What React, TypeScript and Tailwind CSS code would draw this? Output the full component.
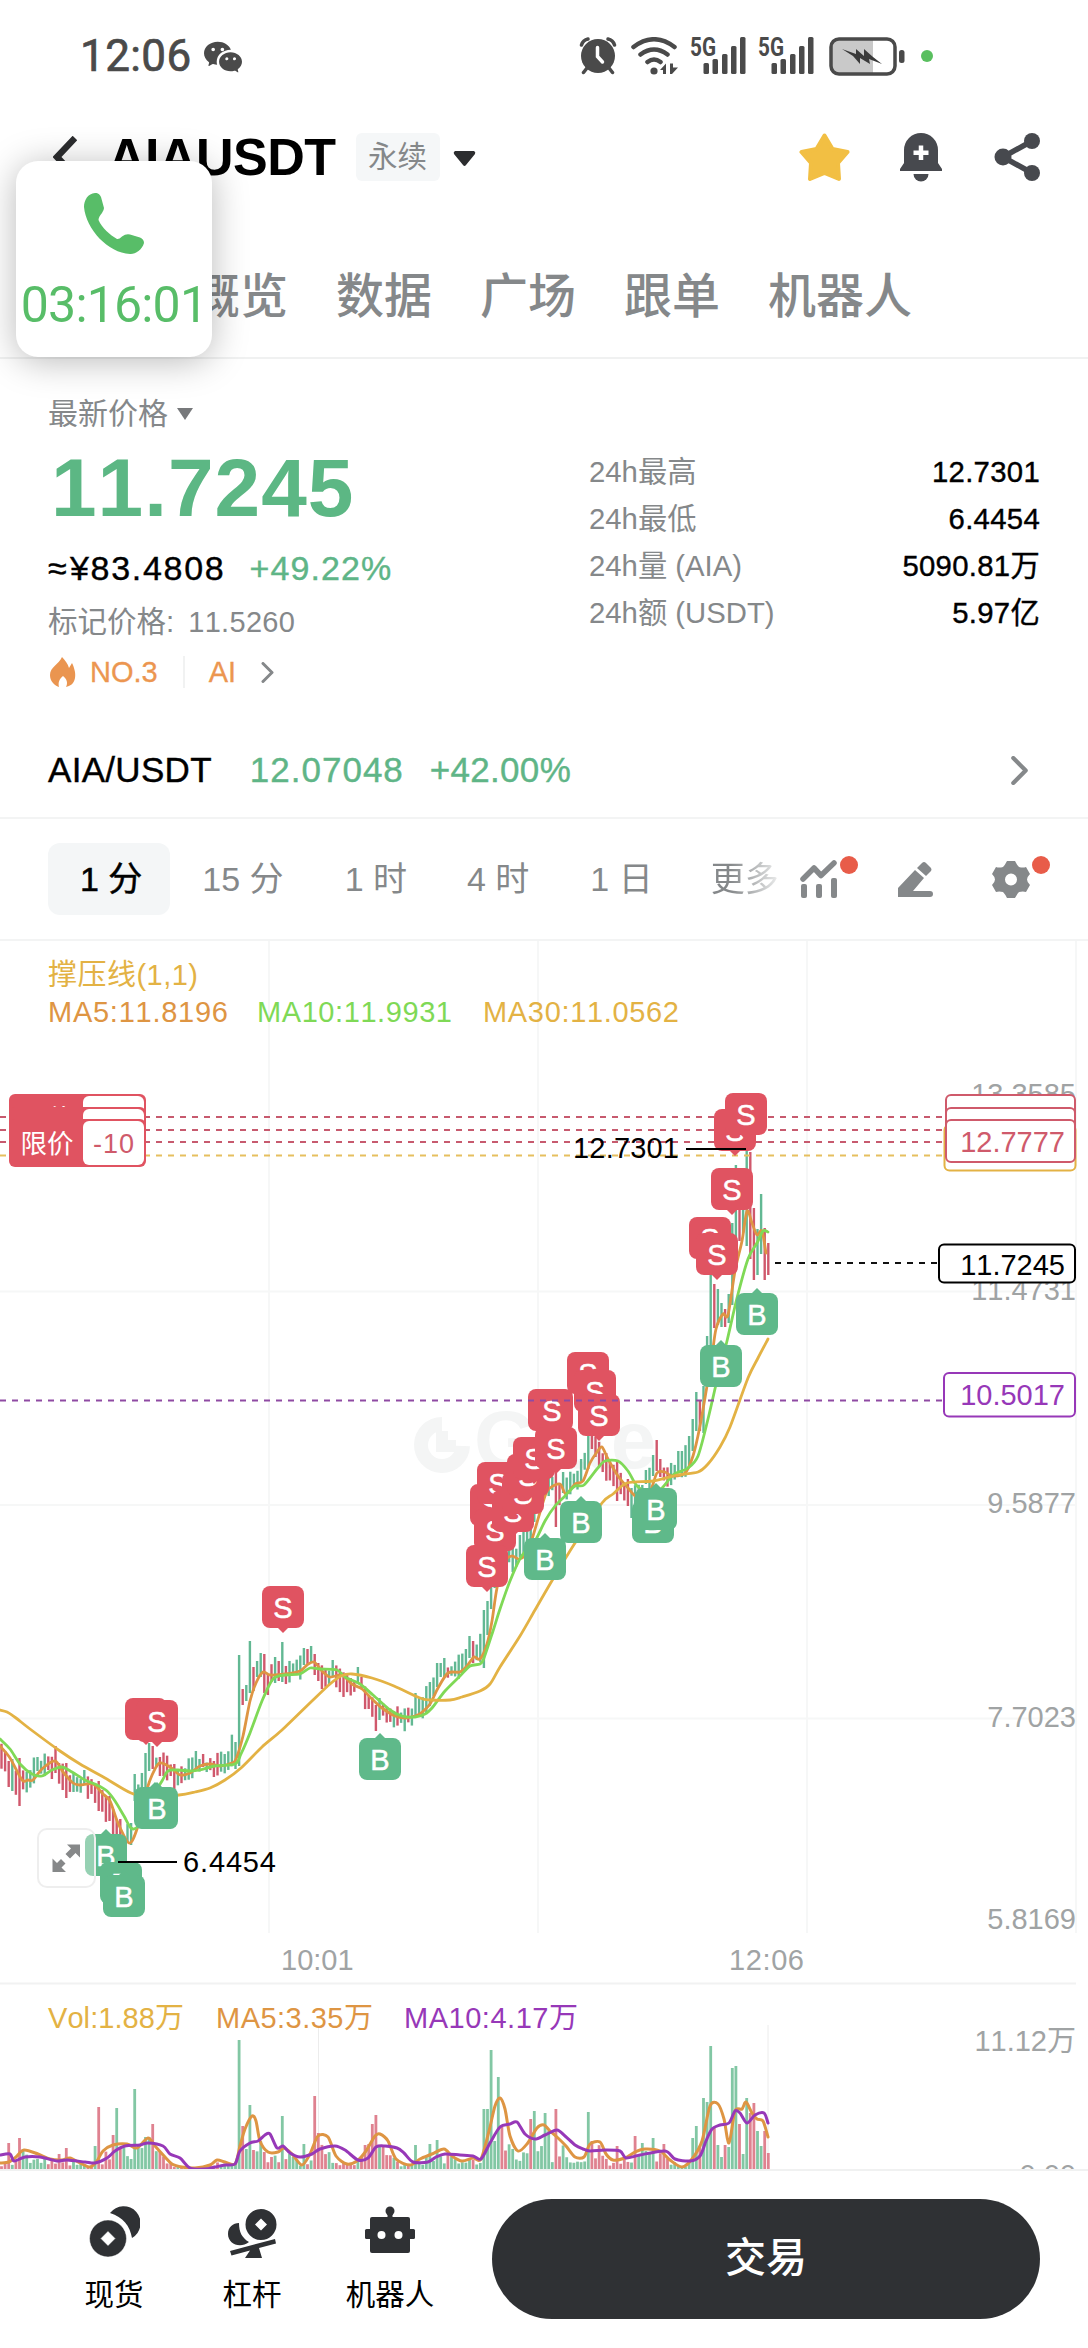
import type { ReactNode } from 'react';
import { BsWechat } from 'react-icons/bs';

type Pt = [number, number];

const GREEN = '#5fb98a';
const RED = '#e05361';
const UP = '#62b893';
const DOWN = '#d0586c';
const ORANGE = '#de9543';
const LIME = '#7fd956';
const GOLD = '#e3b244';
const PURPLE = '#9738b8';
const AXIS = '#a0a3a4';

/* ---------- chart data ---------- */

const ma5: Pt[] = [[0, 1745], [10, 1757], [22, 1779], [28, 1779], [33, 1779], [42, 1768], [55, 1760], [63, 1771], [73, 1782], [80, 1784], [93, 1783], [103, 1793], [110, 1800], [118, 1822], [129, 1842], [137, 1828], [148, 1785], [155, 1768], [160, 1762], [170, 1766], [180, 1774], [190, 1772], [200, 1765], [210, 1763], [220, 1765], [232, 1762], [236, 1758], [243, 1735], [250, 1700], [256, 1682], [263, 1671], [270, 1674], [285, 1673], [300, 1670], [307, 1664], [314, 1661], [322, 1670], [330, 1676], [342, 1674], [352, 1683], [362, 1688], [372, 1698], [382, 1707], [395, 1715], [405, 1717], [415, 1715], [421, 1712], [430, 1703], [438, 1687], [448, 1672], [460, 1671], [467, 1665], [474, 1656], [480, 1658], [487, 1643], [492, 1620], [497, 1587], [505, 1560], [512, 1555], [519, 1558], [527, 1552], [533, 1535], [545, 1495], [550, 1487], [560, 1483], [566, 1493], [575, 1483], [583, 1480], [590, 1462], [597, 1451], [602, 1446], [608, 1458], [618, 1475], [628, 1487], [637, 1496], [650, 1490], [657, 1472], [665, 1471], [672, 1475], [685, 1472], [693, 1455], [700, 1425], [707, 1385], [712, 1355], [716, 1328], [723, 1313], [728, 1314], [735, 1270], [742, 1240], [747, 1210], [752, 1222], [757, 1234], [762, 1230], [766, 1252]];

const ma10: Pt[] = [[0, 1738], [10, 1748], [20, 1763], [32, 1773], [42, 1775], [52, 1769], [62, 1766], [72, 1771], [85, 1779], [97, 1784], [107, 1790], [115, 1800], [124, 1815], [131, 1827], [138, 1825], [150, 1800], [162, 1780], [168, 1770], [178, 1769], [190, 1770], [200, 1769], [215, 1765], [235, 1763], [241, 1753], [250, 1732], [262, 1700], [273, 1678], [285, 1674], [300, 1673], [310, 1667], [320, 1668], [337, 1669], [345, 1676], [360, 1683], [373, 1694], [390, 1709], [402, 1715], [415, 1716], [425, 1713], [432, 1707], [445, 1690], [460, 1675], [470, 1665], [480, 1663], [484, 1657], [493, 1630], [500, 1608], [510, 1580], [521, 1556], [535, 1540], [545, 1520], [555, 1505], [565, 1495], [575, 1485], [584, 1484], [597, 1468], [605, 1460], [618, 1460], [628, 1470], [637, 1485], [650, 1492], [662, 1487], [673, 1474], [688, 1467], [698, 1455], [708, 1418], [718, 1375], [727, 1340], [737, 1297], [748, 1258], [757, 1242], [763, 1230], [768, 1231]];

const ma30: Pt[] = [[0, 1709], [7, 1711], [16, 1717], [30, 1728], [60, 1750], [80, 1763], [105, 1777], [131, 1792], [150, 1796], [179, 1794], [195, 1791], [210, 1787], [225, 1779], [241, 1767], [262, 1746], [282, 1729], [312, 1700], [330, 1683], [341, 1675], [352, 1673], [372, 1677], [394, 1685], [420, 1697], [430, 1699], [450, 1699], [462, 1696], [480, 1690], [490, 1683], [500, 1666], [520, 1635], [535, 1609], [553, 1578], [575, 1542], [602, 1502], [613, 1493], [627, 1482], [653, 1480], [677, 1474], [698, 1471], [708, 1463], [720, 1446], [730, 1426], [748, 1377], [758, 1357], [768, 1338]];

const volMa5: Pt[] = [[0, 2162], [9, 2161], [16, 2156], [24, 2149], [38, 2153], [50, 2158], [62, 2159], [70, 2157], [80, 2162], [90, 2166], [97, 2160], [103, 2150], [113, 2144], [127, 2143], [137, 2147], [148, 2137], [155, 2145], [165, 2156], [172, 2163], [182, 2166], [195, 2167], [210, 2164], [217, 2159], [225, 2161], [235, 2163], [240, 2145], [245, 2128], [252, 2115], [256, 2120], [260, 2140], [268, 2151], [278, 2151], [284, 2147], [292, 2153], [302, 2164], [310, 2153], [318, 2135], [328, 2136], [336, 2155], [347, 2163], [357, 2160], [366, 2150], [375, 2135], [380, 2133], [388, 2140], [396, 2158], [410, 2164], [420, 2158], [432, 2153], [444, 2148], [452, 2155], [462, 2160], [473, 2157], [481, 2158], [489, 2130], [495, 2105], [500, 2097], [505, 2108], [510, 2135], [518, 2150], [527, 2143], [537, 2127], [544, 2124], [550, 2130], [558, 2137], [566, 2145], [575, 2156], [584, 2156], [590, 2143], [600, 2141], [606, 2153], [613, 2159], [625, 2157], [635, 2151], [645, 2148], [660, 2150], [670, 2159], [682, 2166], [692, 2158], [702, 2140], [710, 2105], [718, 2103], [724, 2118], [729, 2142], [735, 2110], [742, 2108], [746, 2101], [752, 2112], [757, 2118], [763, 2120], [768, 2136]];

const volMa10: Pt[] = [[0, 2154], [10, 2153], [14, 2160], [25, 2156], [40, 2156], [57, 2160], [67, 2159], [85, 2161], [95, 2162], [107, 2157], [115, 2150], [125, 2145], [140, 2144], [148, 2142], [163, 2145], [170, 2153], [180, 2157], [190, 2167], [205, 2168], [215, 2166], [225, 2164], [235, 2163], [240, 2150], [250, 2142], [258, 2140], [265, 2134], [270, 2133], [277, 2147], [283, 2145], [290, 2152], [300, 2156], [312, 2153], [320, 2148], [335, 2145], [345, 2149], [358, 2159], [368, 2157], [376, 2146], [385, 2145], [397, 2147], [404, 2152], [413, 2161], [428, 2161], [436, 2156], [445, 2153], [460, 2154], [473, 2155], [481, 2158], [490, 2142], [500, 2126], [510, 2123], [517, 2121], [525, 2133], [535, 2138], [545, 2134], [557, 2129], [565, 2135], [575, 2144], [583, 2148], [590, 2150], [605, 2149], [620, 2150], [626, 2157], [640, 2154], [665, 2150], [675, 2158], [690, 2160], [700, 2155], [706, 2140], [712, 2128], [720, 2124], [729, 2122], [735, 2110], [740, 2112], [747, 2122], [755, 2114], [764, 2112], [768, 2122]];

// x, high, low, 1 = up / 0 = down
const bigCandles: number[][] = [
  [9, 1760, 1786, 0], [12, 1758, 1790, 1], [20, 1757, 1805, 0], [38, 1756, 1770, 1], [56, 1745, 1772, 0], [67, 1762, 1797, 0],
  [85, 1769, 1784, 1], [99, 1780, 1810, 0], [109, 1795, 1820, 0], [113, 1808, 1834, 0], [120, 1818, 1836, 0], [131, 1822, 1844, 1],
  [135, 1773, 1800, 1], [145, 1752, 1790, 1], [149, 1742, 1770, 1], [153, 1745, 1768, 0], [160, 1756, 1775, 0], [174, 1763, 1790, 0],
  [196, 1750, 1768, 1], [203, 1753, 1766, 0], [214, 1760, 1776, 0], [236, 1741, 1768, 1], [239, 1654, 1765, 1], [243, 1688, 1704, 0],
  [247, 1684, 1700, 1], [250, 1640, 1692, 1], [254, 1666, 1690, 0], [257, 1660, 1676, 1], [261, 1652, 1676, 1], [264.5, 1653, 1692, 0],
  [268, 1674, 1694, 0], [275, 1656, 1682, 1], [279, 1660, 1680, 0], [282.5, 1641, 1681, 1], [304, 1647, 1664, 1], [308, 1648, 1664, 0],
  [311, 1645, 1662, 1], [315, 1653, 1674, 0], [319, 1662, 1680, 0], [333, 1659, 1676, 1], [358, 1666, 1683, 1], [362, 1676, 1688, 0],
  [376, 1704, 1730, 0], [379, 1697, 1719, 1], [415, 1692, 1715, 1], [437, 1662, 1686, 1], [441, 1662, 1676, 1], [444, 1657, 1676, 1],
  [466, 1648, 1668, 1], [469, 1635, 1657, 1], [473, 1640, 1662, 0], [484, 1609, 1667, 1], [487, 1600, 1634, 1], [491, 1585, 1608, 1],
  [512, 1545, 1571, 1], [519, 1534, 1556, 1], [556, 1472, 1526, 0], [563, 1471, 1492, 1], [588, 1430, 1468, 1], [592, 1432, 1448, 0],
  [595, 1436, 1456, 0], [617, 1460, 1500, 0], [628, 1478, 1505, 0], [632, 1487, 1517, 1], [646, 1469, 1483, 1], [653, 1454, 1475, 1],
  [656, 1439, 1470, 0], [660, 1458, 1476, 0], [678, 1450, 1472, 1], [689, 1435, 1466, 1], [692, 1418, 1450, 1], [696, 1391, 1430, 1],
  [699.5, 1400, 1430, 0], [703, 1385, 1432, 1], [710, 1270, 1378, 1], [714, 1283, 1327, 0], [717, 1288, 1324, 1], [721, 1302, 1326, 1],
  [725, 1308, 1326, 0], [728, 1293, 1322, 1], [732, 1222, 1304, 1], [735.5, 1164, 1250, 1], [739, 1206, 1240, 0], [743, 1195, 1232, 1],
  [746, 1149, 1245, 1], [750, 1151, 1258, 0], [753.5, 1207, 1279, 0], [757, 1228, 1274, 1], [760.5, 1193, 1253, 1], [764, 1227, 1279, 0], [767.5, 1242, 1274, 0],
];

// x, height, 1 = up / 0 = down
const bigVolumes: number[][] = [
  [9, 26, 0], [20, 31, 0], [24, 20, 1], [60, 15, 0], [67, 21, 0], [96, 23, 1], [99, 62, 0], [113, 34, 0], [117, 61, 1], [135, 80, 1],
  [146, 32, 1], [150, 32, 1], [153, 45, 0], [239.5, 129, 1], [243, 43, 0], [250, 64, 1], [254, 19, 0], [261, 28, 1], [282.5, 53, 1],
  [304, 25, 1], [315, 73, 0], [318, 36, 0], [365, 24, 0], [369, 25, 0], [372, 45, 0], [376, 54, 0], [379, 22, 1], [415, 24, 1],
  [430, 25, 1], [437, 29, 1], [484, 60, 1], [487.5, 60, 1], [491, 119, 1], [494.5, 28, 1], [498, 92, 1], [502, 42, 0], [530, 50, 0],
  [534, 58, 1], [545, 56, 1], [548, 38, 1], [555.5, 60, 0], [588, 57, 1], [592, 28, 0], [617, 23, 0], [635, 33, 0], [642, 26, 1],
  [653, 31, 1], [664, 25, 0], [692, 31, 1], [696, 43, 1], [703, 71, 1], [706.5, 67, 1], [710, 123, 1], [714, 41, 0], [717, 24, 1],
  [721, 12, 1], [725, 24, 0], [728, 22, 1], [731.5, 101, 1], [735.5, 103, 1], [739, 45, 0], [743, 15, 1], [746, 71, 1], [750, 56, 0],
  [753.5, 66, 0], [757, 38, 1], [760.5, 23, 1], [764, 38, 0], [767.5, 16, 0],
];

const STEP = 3.6;
const COUNT = 214;

const rand = (n: number) => {
  const v = Math.sin(n * 127.1 + 11.7) * 43758.5453;
  return v - Math.floor(v);
};

const yAt = (pts: Pt[], x: number) => {
  if (x >= pts[pts.length - 1][0]) return pts[pts.length - 1][1];
  const i = Math.max(1, pts.findIndex((p) => p[0] > x));
  const [x0, y0] = pts[i - 1];
  const [x1, y1] = pts[i];
  return y0 + ((y1 - y0) * (x - x0)) / (x1 - x0);
};

const candles = Array.from({ length: COUNT }, (_, i) => {
  const x = 1.5 + i * STEP;
  const fixed = bigCandles.find((c) => Math.abs(c[0] - x) < STEP / 2);
  if (fixed) return { x, top: fixed[1], bottom: fixed[2], up: fixed[3] === 1 };
  const slope = yAt(ma5, x + 9) - yAt(ma5, x + 2);
  const mid = yAt(ma5, x + 6) + (rand(i) - 0.5) * 6;
  const half = 4 + rand(i + 300) * 7 + Math.min(8, Math.abs(slope) * 0.3);
  return { x, top: mid - half, bottom: mid + half, up: slope + (rand(i + 700) - 0.5) * 8 < 0 };
});

const volumes = Array.from({ length: COUNT }, (_, i) => {
  const x = 1.5 + i * STEP;
  const fixed = bigVolumes.find((c) => Math.abs(c[0] - x) < STEP / 2);
  if (fixed) return { x, h: fixed[1], up: fixed[2] === 1 };
  const avg = Math.min(26, 2168 - yAt(volMa5, x));
  return { x, h: 1 + avg * (0.2 + rand(i + 900) * 0.75), up: candles[i].up };
});

const line = (pts: Pt[]) => {
  let d = `M${pts[0][0]} ${pts[0][1]}`;
  for (let i = 0; i < pts.length - 1; i++) {
    const a = pts[Math.max(0, i - 1)];
    const b = pts[i];
    const c = pts[i + 1];
    const e = pts[Math.min(pts.length - 1, i + 2)];
    d += `C${b[0] + (c[0] - a[0]) / 7} ${b[1] + (c[1] - a[1]) / 7} ${c[0] - (e[0] - b[0]) / 7} ${c[1] - (e[1] - b[1]) / 7} ${c[0]} ${c[1]}`;
  }
  return d;
};

// left, top of each trade marker, in paint order
const trades: [string, number, number][] = [
  ['S', 125, 1697], ['S', 136, 1699], ['B', 134, 1786], ['B', 136, 1786], ['S', 262, 1585], ['B', 359, 1737],
  ['B', 85, 1833], ['B', 100, 1861], ['B', 103, 1874],
  ['S', 470, 1483], ['S', 477, 1461], ['S', 474, 1508], ['S', 492, 1489], ['S', 502, 1471], ['S', 507, 1453], ['S', 513, 1436],
  ['S', 466, 1544], ['S', 528, 1388], ['S', 531, 1388], ['S', 535, 1426],
  ['S', 567, 1351], ['S', 574, 1369], ['S', 578, 1393],
  ['B', 524, 1537], ['B', 560, 1500], ['B', 632, 1500], ['B', 635, 1487],
  ['S', 714, 1108], ['S', 725, 1092], ['S', 711, 1167], ['S', 689, 1216], ['S', 696, 1232],
  ['B', 736, 1292], ['B', 700, 1344],
];

/* ---------- chart ---------- */

const Trade = ({ side, x, y }: { side: string; x: number; y: number }) => {
  const sell = side === 'S';
  return (
    <g transform={`translate(${x} ${y})`} fill={sell ? RED : GREEN}>
      <rect width="42" height="42" rx="8" />
      <path d={sell ? 'M15 41L21 47L27 41Z' : 'M15 1L21 -5L27 1Z'} />
      <text x="21" y="31.5" textAnchor="middle" fontSize="29" fill="#fff" stroke="#fff" strokeWidth="0.5">{side}</text>
    </g>
  );
};

const PriceTag = ({ x, y, w, h, color, text, base }: any) => (
  <g>
    <rect x={x} y={y} width={w} height={h} rx="5" fill="#fff" stroke={color} strokeWidth="2" />
    {text && <text x="1065" y={base} textAnchor="end" fill={color}>{text}</text>}
  </g>
);

const Chart = () => (
  <svg viewBox="0 940 1088 1228" className="block h-[1228px] w-full" fontSize="29">
    {/* grid */}
    <g stroke="#f6f7f7" strokeWidth="2">
      {[269, 538, 807, 1076].map((x) => <line key={x} x1={x} x2={x} y1="940" y2="1932" />)}
      {[1290.5, 1504, 1717.5].map((y) => <line key={y} x1="0" x2="1076" y1={y} y2={y} />)}
      <line x1="0" x2="1076" y1="1982.5" y2="1982.5" stroke="#f1f2f2" />
      <line x1="318.5" x2="318.5" y1="2026" y2="2168" strokeWidth="1" stroke="#ececec" />
      <line x1="768" x2="768" y1="2024" y2="2168" strokeWidth="1" stroke="#ececec" />
    </g>

    {/* watermark */}
    <g fill="none" stroke="#f4f5f5" strokeWidth="14">
      <path d="M442 1423A21 21 0 1 0 463 1445" />
      <path d="M442 1430V1445H456" strokeWidth="12" />
      <text x="474" y="1467" fontSize="82" fontWeight="700" fill="#f4f5f5" stroke="none">Gate</text>
    </g>

    {/* legends */}
    <text x="48" y="984" fill={GOLD} textLength="150">撑压线(1,1)</text>
    <text x="48" y="1021" fill={ORANGE} textLength="180">MA5:11.8196</text>
    <text x="257" y="1021" fill={LIME} textLength="195">MA10:11.9931</text>
    <text x="483" y="1021" fill={GOLD} textLength="196">MA30:11.0562</text>

    {/* axes */}
    <g fill={AXIS}>
      <text x="1076" y="1103" textAnchor="end">13.3585</text>
      <text x="1076" y="1299" textAnchor="end">11.4731</text>
      <text x="1076" y="1512" textAnchor="end">9.5877</text>
      <text x="1076" y="1726" textAnchor="end">7.7023</text>
      <text x="1076" y="1928" textAnchor="end">5.8169</text>
      <text x="281" y="1969">10:01</text>
      <text x="729" y="1969" textLength="75">12:06</text>
      <text x="1076" y="2050" textAnchor="end">11.12万</text>
      <text x="1076" y="2184" textAnchor="end">0.00</text>
    </g>

    {candles.map((c) => (
      <rect key={c.x} x={c.x - 1.2} y={c.top} width="2.4" height={c.bottom - c.top} fill={c.up ? UP : DOWN} />
    ))}

    <g fill="none" strokeWidth="2.8" strokeLinecap="round" strokeLinejoin="round">
      <path d={line(ma5)} stroke={ORANGE} />
      <path d={line(ma10)} stroke={LIME} />
      <path d={line(ma30)} stroke={GOLD} />
    </g>

    {/* pending orders */}
    <g strokeWidth="2" strokeDasharray="6 6">
      {[1116, 1129, 1141].map((y) => <line key={y} x1="0" x2="945" y1={y} y2={y} stroke="#c75a6e" />)}
      <line x1="0" x2="944" y1="1154.5" y2="1154.5" stroke="#e6bf5e" />
    </g>

    {trades.map(([side, x, y]) => <Trade key={`${x}-${y}`} side={side} x={x} y={y} />)}

    <line x1="0" x2="944" y1="1399.5" y2="1399.5" stroke="#8f4aa3" strokeWidth="2" strokeDasharray="6 6" />
    <line x1="775" x2="938" y1="1262" y2="1262" stroke="#111" strokeWidth="2" strokeDasharray="6 6" />

    {/* high and low */}
    <text x="679" y="1156.5" textAnchor="end" textLength="106">12.7301</text>
    <line x1="686" x2="746" y1="1148" y2="1148" stroke="#000" strokeWidth="2" />
    <text x="183" y="1871" textLength="93">6.4454</text>

    <PriceTag x={944.5} y={1124} w={131} h={45.5} color={GOLD} />
    <PriceTag x={946} y={1094} w={129} h={43} color="#cf5a6b" />
    <PriceTag x={946} y={1107} w={129} h={43} color="#cf5a6b" />
    <PriceTag x={946} y={1119} w={129} h={42} color="#cf5a6b" text="12.7777" base={1151} />
    <PriceTag x={939} y={1243.5} w={136} h={38} color="#000" text="11.7245" base={1274} />
    <PriceTag x={944} y={1372} w={131} h={43.5} color={PURPLE} text="10.5017" base={1404} />

    {[1093, 1106, 1118].map((y) => (
      <g key={y} transform={`translate(9 ${y})`}>
        <rect width="137" height="48" rx="6" fill={RED} />
        <text x="11.5" y="33.5" fontSize="26.5" fill="#fff">限价</text>
        <rect x="74" y="2" width="61" height="44" rx="6" fill="#fff" />
        <text x="84" y="33.5" fontSize="27" fill="#cf5a6b" textLength="41">-10</text>
      </g>
    ))}

    {/* fullscreen toggle */}
    <rect x="38" y="1828" width="57" height="58" rx="9" fill="#fff" fillOpacity="0.35" stroke="#eeeeee" strokeWidth="2" />
    <path d="M67 1843.5H80V1856.5L75.5 1852L70 1857.5L65.5 1853L71 1847.5ZM66 1871H52.5V1857.5L57 1862L61 1858L65.5 1862.5L61.5 1866.5Z" fill="#868889" />
    <line x1="118" x2="177" y1="1861" y2="1861" stroke="#000" strokeWidth="2" />

    {/* volume */}
    <text x="48" y="2027" fill={GOLD} textLength="136">Vol:1.88万</text>
    <text x="216" y="2027" fill={ORANGE} textLength="157">MA5:3.35万</text>
    <text x="404" y="2027" fill={PURPLE} textLength="174">MA10:4.17万</text>
    {volumes.map((v) => (
      <rect key={v.x} x={v.x - 1.4} y={2168 - v.h} width="2.8" height={v.h} fill={v.up ? '#82c7a4' : '#df8290'} />
    ))}
    <g fill="none" strokeWidth="3" strokeLinecap="round" strokeLinejoin="round">
      <path d={line(volMa5)} stroke={ORANGE} />
      <path d={line(volMa10)} stroke={PURPLE} />
    </g>
  </svg>
);

/* ---------- status bar ---------- */

const Signal = () => (
  <svg width="57" height="38" viewBox="0 0 57 38" fill="#4a4a4a" className="overflow-visible">
    <text x="0" y="18.5" fontSize="25" fontWeight="700" textLength="26" lengthAdjust="spacingAndGlyphs" fontFamily="Roboto">5G</text>
    <rect x="13.5" y="26" width="5.5" height="11" rx="1.5" />
    <rect x="22.5" y="22" width="5.5" height="15" rx="1.5" />
    <rect x="32" y="17" width="5.5" height="20" rx="1.5" />
    <rect x="41" y="9" width="5.5" height="28" rx="1.5" />
    <rect x="50" y="0" width="5.5" height="37" rx="1.5" />
  </svg>
);

const StatusBar = () => (
  <div className="flex h-28 items-center pl-[80px] pr-[155px] text-[#4a4a4a]">
    <span className="font-[Roboto] text-[44px] leading-none tracking-[0.4px] [-webkit-text-stroke:0.7px]">12:06</span>
    <BsWechat className="ml-3 h-[38px] w-[38px]" />
    <svg className="ml-auto" width="38" height="38" viewBox="0 0 38 38" fill="none" stroke="#4a4a4a" strokeWidth="4.5" strokeLinecap="round">
      <circle cx="19" cy="19" r="17" fill="#4a4a4a" stroke="none" />
      <path d="M2.5 8Q4 3 9 2M29 2Q34 3 35.5 8M8 31L4.5 35.5M30 31L33.5 35.5" strokeWidth="3.5" />
      <path d="M18.5 10.5V19.5L23.5 25" stroke="#fff" strokeWidth="3.5" />
    </svg>
    <svg className="ml-3.5" width="47" height="38" viewBox="0 0 47 38" fill="none" stroke="#4a4a4a" strokeWidth="4.5" strokeLinecap="round">
      <path d="M2.5 10Q23 -5.5 43.5 10M9.5 17.5Q23 7.5 36.5 17.5M16.5 25Q23 20 29.5 25" />
      <circle cx="23" cy="34" r="3.6" fill="#4a4a4a" stroke="none" />
      <path d="M29 33L35 26.5V37H32V33ZM39 26.5V37H41L47 30.5H42V26.5Z" fill="#4a4a4a" stroke="none" />
    </svg>
    <span className="ml-3 flex gap-[11px]"><Signal /><Signal /></span>
    <svg className="ml-[14px]" width="77" height="39" viewBox="0 0 77 39">
      <path d="M8 2H44V37H8Q2 37 2 31V8Q2 2 8 2Z" fill="#c9c9c9" />
      <rect x="2" y="2" width="64" height="35" rx="8" fill="none" stroke="#4a4a4a" strokeWidth="3.5" />
      <rect x="70" y="13" width="5.5" height="13" rx="2.5" fill="#4a4a4a" />
      <path d="M13 12L27 17V12L35 19V12L44 20L53 27L40 22L41 27L31 21V27L24 19Z" fill="#3a3a3a" />
    </svg>
    <span className="ml-[15px] h-3 w-3 rounded-full bg-[#59bf5f]" />
  </div>
);

/* ---------- header ---------- */

const TitleRow = () => (
  <div className="flex h-[90px] items-center pl-[53px] pr-[47px]">
    <svg width="24" height="42" viewBox="0 0 24 42" fill="none" stroke="#2c2d2f" strokeWidth="6.5"><path d="M22 2L4 21L22 40" /></svg>
    <h1 className="ml-[31px] text-[52px] font-bold leading-none tracking-[-0.5px] text-black">AIAUSDT</h1>
    <span className="ml-5 flex h-12 w-[84px] items-center justify-center rounded-md bg-[#f5f7f8] text-[29.5px] text-[#85888a]">永续</span>
    <svg className="ml-[13px] mt-1" width="23" height="16" viewBox="0 0 23 16" fill="#2c2d2f"><path d="M2 0H21Q23 1 22 3L13 14Q11.5 16 10 14L1 3Q0 1 2 0Z" /></svg>
    <svg className="ml-auto" width="51" height="50" viewBox="0 0 51 50" fill="#f2bf43" stroke="#f2bf43" strokeWidth="4" strokeLinejoin="round">
      <path d="M25.5 3.500L33.500 17L48.500 20L39 31L40 47L25.5 41L11 47L12 31L2.5 20L17.500 17Z" />
    </svg>
    <svg className="ml-[49px]" width="44" height="50" viewBox="0 0 44 50" fill="#47494e">
      <path d="M5 35V18A17 17 0 0 1 39 18V31L43 37V39H1V37L5 31Z" />
      <path d="M14.5 42H29.5A7.5 7.5 0 0 1 14.5 42Z" />
      <path d="M22 13.5V28M14.500 20.7H29.500" stroke="#fff" strokeWidth="4.5" />
    </svg>
    <svg className="ml-[51px]" width="47" height="50" viewBox="0 0 47 50" fill="#47494e">
      <path d="M38 9L9 25L38 41" fill="none" stroke="#47494e" strokeWidth="5.5" />
      <circle cx="38" cy="9" r="8" /><circle cx="9" cy="25" r="8.5" /><circle cx="38" cy="41" r="8" />
    </svg>
  </div>
);

const TabRow = () => (
  <div className="flex h-[157px] gap-12 border-b-2 border-[#f0f1f1] pl-[192px] pt-[59px] text-[48px] font-medium leading-[72px] text-[#85888a]">
    {['概览', '数据', '广场', '跟单', '机器人'].map((t) => <span key={t}>{t}</span>)}
  </div>
);

const CallBubble = () => (
  <div className="absolute left-4 top-[161px] flex h-[196px] w-[196px] flex-col items-center rounded-[22px] bg-white pt-8 text-[#58bd68] shadow-[0_4px_36px_rgba(0,0,0,0.28)]">
    <svg width="60" height="62" viewBox="0 0 60 62" fill="currentColor">
      <path d="M11 0Q15 -0.5 17 4L20 15Q20 17 18 20Q14.5 24 14.5 27C18 35 26 42 33 46Q35 46.5 38 43.5Q42 40.5 46 41.5L56 44.5Q60 46 60 50C58 57 51 61.5 46 61C24 60 2 36 0 14C0 7 4 0.5 11 0Z" />
    </svg>
    <span className="mt-[24px] whitespace-nowrap font-[Roboto] text-[50px] leading-[52px] tracking-[-0.8px]">03:16:01</span>
  </div>
);

/* ---------- price summary ---------- */

const Chevron = ({ w, h }: { w: number; h: number }) => (
  <svg width={w} height={h} viewBox="0 0 16 28" fill="none" stroke="#85888a" strokeWidth="4" strokeLinecap="round" strokeLinejoin="round"><path d="M2 2L14 14L2 26" /></svg>
);

const stats = [
  ['24h最高', '12.7301'],
  ['24h最低', '6.4454'],
  ['24h量 (AIA)', '5090.81万'],
  ['24h额 (USDT)', '5.97亿'],
];

const Summary = () => (
  <section className="h-[460px] border-b-2 border-[#f3f4f4] px-12">
    <div className="flex justify-between">
      <div className="pt-[35px] text-[29px] leading-10 text-[#85888a]">
        <div className="flex items-center text-[30px]">
          最新价格
          <svg className="ml-[9px]" width="16" height="12" viewBox="0 0 16 12" fill="#77797b"><path d="M0 0H16L8 12Z" /></svg>
        </div>
        <div className="ml-[3px] mt-3.5 text-[82px] font-bold leading-[80px] tracking-[1px] text-[#5cb784]">11.7245</div>
        <div className="mt-5 flex gap-6 text-[34px] tracking-[1.7px] text-black [-webkit-text-stroke:0.4px]">
          <span className="flex"><span className="w-[22px] overflow-hidden tracking-normal">≈</span>¥83.4808</span>
          <span className="tracking-[1.1px] text-[#5fb587]">+49.22%</span>
        </div>
        <div className="mt-3.5"><span className="text-[29.5px]">标记价格:</span> <span className="ml-1.5 tracking-[0.3px]">11.5260</span></div>
        <div className="mt-2.5 flex items-center text-[#ec9650] [-webkit-text-stroke:0.3px]">
          <svg className="ml-0.5" width="26" height="30" viewBox="0 0 26 30" fill="#ea9550">
            <path d="M12 0C15 3 18 7 19 11L22 6C24 10 26 16 25 21C24 27 20 29 16 30C18 26 17 22 13 19C9 22 8 26 9 30C4 28 0 24 0 18C0 10 9 7 12 0Z" />
          </svg>
          <span className="ml-3.5">NO.3</span>
          <span className="ml-[25px] h-8 w-0.5 bg-[#f1f2f2]" />
          <span className="ml-[24px] mr-[25px]">AI</span>
          <Chevron w={13} h={21} />
        </div>
      </div>
      <dl className="w-[451px] pt-[89px] text-[29.3px] leading-[47px]">
        {stats.map(([k, v]) => (
          <div key={k} className="flex justify-between">
            <dt className="text-[#85888a]">{k}</dt>
            <dd className="tracking-[0.3px] text-black [-webkit-text-stroke:0.4px]">{v}</dd>
          </div>
        ))}
      </dl>
    </div>
    <div className="mt-[31px] flex h-[94px] items-center pr-[12px] text-[35px] [-webkit-text-stroke:0.4px]">
      <span className="tracking-[0.3px] text-black">AIA/USDT</span>
      <span className="ml-[38px] tracking-[1px] text-[#5fb587]">12.07048</span>
      <span className="ml-[26px] tracking-[0.3px] text-[#5fb587]">+42.00%</span>
      <span className="ml-auto"><Chevron w={17} h={29} /></span>
    </div>
  </section>
);

/* ---------- timeframes ---------- */

const ToolIcon = ({ dot, children }: { dot?: boolean; children: ReactNode }) => (
  <span className="relative">
    <svg width="39" height="39" viewBox="0 0 39 39" fill="#85888a">{children}</svg>
    {dot && <span className="absolute -right-[19px] -top-[4px] h-[18px] w-[18px] rounded-full bg-[#e85c49]" />}
  </span>
);

const Timeframes = () => (
  <div className="flex h-[122px] items-center border-b-2 border-[#f3f4f4] pl-12 text-[34px] text-[#85888a]">
    <span className="rounded-xl bg-[#f4f6f7] pl-[32px] pr-[28px] leading-[72px] text-black [-webkit-text-stroke:0.5px]">1 分</span>
    <span className="pl-[32px] pr-[29px]">15 分</span>
    <span className="pl-[32px] pr-[28px]">1 时</span>
    <span className="pl-[32px] pr-[29px]">4 时</span>
    <span className="pl-[32px] pr-[28px]">1 日</span>
    <span className="bg-gradient-to-r from-[#85888a] from-50% to-[#eceded] bg-clip-text pl-[30px] text-transparent">更多</span>
    <div className="ml-auto flex gap-[57px] pr-[57px]">
      <ToolIcon dot>
        <path d="M3 19L14 8L21 15.5L34 3" fill="none" stroke="#85888a" strokeWidth="5.5" strokeLinecap="round" strokeLinejoin="round" />
        <rect x="1" y="24" width="6" height="14" rx="2" /><rect x="16" y="24" width="6" height="14" rx="2" /><rect x="31" y="18" width="6" height="20" rx="2" />
      </ToolIcon>
      <ToolIcon>
        <path d="M2 37V28L19 10L28 18L17 31H34Q37 31 37 34Q37 37 34 37Z" /><path d="M21 8L26 3Q28 1 30 3L35 8Q36 10 35 11L30 16Z" />
      </ToolIcon>
      <ToolIcon dot>
        <path fillRule="evenodd" d="M15 1H23Q25 5 27 7Q31 8 34 7L38 14Q35 17 35 19.5Q35 22 38 25L34 32Q31 31 27 32Q25 34 23 38H15Q13 34 11 32Q7 31 4 32L0 25Q3 22 3 19.5Q3 17 0 14L4 7Q7 8 11 7Q13 5 15 1ZM19 13.5A6 6 0 1 0 19 25.5A6 6 0 1 0 19 13.5Z" />
      </ToolIcon>
    </div>
  </div>
);

/* ---------- bottom bar ---------- */

const NavItem = ({ label, children }: { label: string; children: ReactNode }) => (
  <div className="flex w-[138px] flex-col items-center">
    <svg width="52" height="54" viewBox="0 0 52 54" fill="#2f3134">{children}</svg>
    <span className="mt-[15px] text-[29.5px] leading-10 text-black">{label}</span>
  </div>
);

const BottomBar = () => (
  <footer className="flex h-[180px] border-t-2 border-[#f0f1f1] pl-[45px] pr-12 pt-[28px]">
    <div className="flex pt-[7px]">
      <NavItem label="现货">
        <path d="M22 7A17 17 0 1 1 44 32C42 20 35 11 22 7Z" />
        <path fillRule="evenodd" d="M20 14A18.5 18.5 0 1 0 20 51A18.5 18.5 0 1 0 20 14ZM20 25.5L27 32.5L20 39.5L13 32.5Z" stroke="#fff" strokeWidth="0.5" />
      </NavItem>
      <NavItem label="杠杆">
        <path fillRule="evenodd" d="M35 3A15.5 15.5 0 1 0 35 34A15.5 15.5 0 1 0 35 3ZM35 12.5L41 18.5L35 24.5L29 18.5Z" />
        <path d="M13 17C13 26 16 32 23 36C14 43 2 38 2 28C2 21 7 17 13 17Z" />
        <path d="M4 45L49 33L50 37.5L33 42L36 52H19L24 44.5L5.500 49.500Z" />
      </NavItem>
      <NavItem label="机器人">
        <rect x="6" y="11" width="40" height="36" rx="2" /><rect x="1" y="23" width="50" height="10" rx="1.5" />
        <circle cx="26" cy="5" r="4.5" /><rect x="23.5" y="6" width="5" height="6" />
        <circle cx="17.5" cy="29" r="4" fill="#fff" /><circle cx="34.5" cy="29" r="4" fill="#fff" />
      </NavItem>
    </div>
    <button className="ml-auto h-[120px] w-[548px] rounded-full bg-[#2f3134] text-[41px] font-medium text-white">交易</button>
  </footer>
);

export default function App() {
  return (
    <div className="relative w-[1088px] overflow-hidden bg-white font-['Liberation_Sans','Noto_Sans_CJK_SC',sans-serif] [font-kerning:none]">
      <StatusBar />
      <TitleRow />
      <TabRow />
      <Summary />
      <Timeframes />
      <Chart />
      <BottomBar />
      <CallBubble />
    </div>
  );
}
